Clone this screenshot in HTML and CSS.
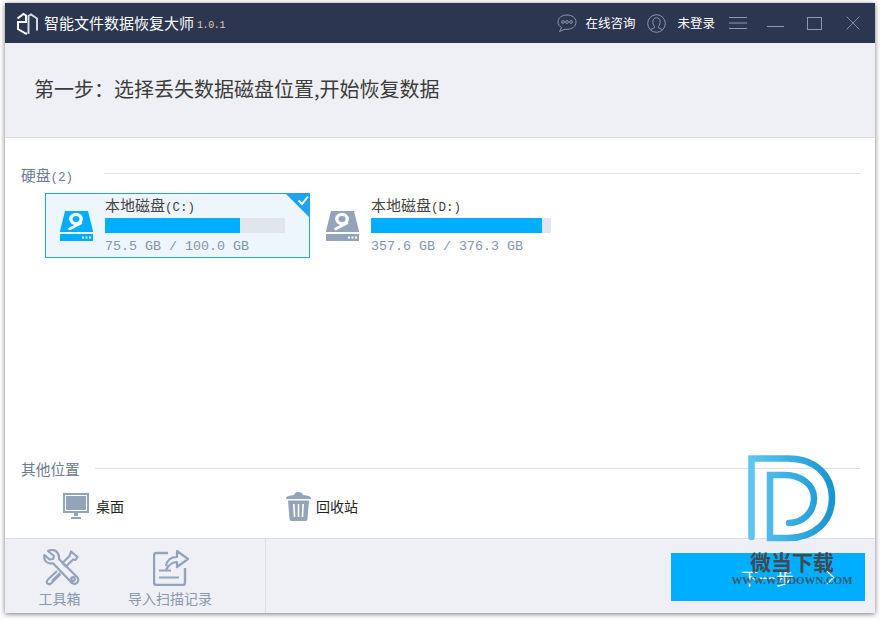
FILE: index.html
```html
<!DOCTYPE html>
<html lang="zh">
<head>
<meta charset="utf-8">
<title>智能文件数据恢复大师</title>
<link rel="stylesheet" href="styles.css">
</head>
<body>
<div class="window">
  <header class="titlebar">
    <svg class="logo" width="22" height="23" viewBox="0 0 22 23" fill="none" stroke="#fff" stroke-width="2">
      <path d="M1.500 6.500 L7.500 2 L10 3.500 V10 H2 V17 L9.500 21.500 H11"/>
      <path d="M12.500 22 V4 L15 2.500 L21 6.500 V18.500" stroke="#d5d9e2"/>
    </svg>
    <span class="app-name">智能文件数据恢复大师</span>
    <span class="version">1.0.1</span>
    <div class="title-actions">
      <svg class="icon-chat" width="20" height="19" viewBox="0 0 20 19" fill="none" stroke="#8a97ab" stroke-width="1">
        <path d="M10 1 C5 1 1 3.800 1 8 C1 10.500 2.600 12.400 4.600 13.600 L2.500 17.500 L8 15.200 C8.700 15.300 9.300 15.300 10 15.300 C15 15.300 19 12.300 19 8 C19 3.800 15 1 10 1 Z"/>
        <circle cx="6" cy="8" r="1.400"/><circle cx="10" cy="8" r="1.400"/><circle cx="14" cy="8" r="1.400"/>
      </svg>
      <span class="action-text chat-text">在线咨询</span>
      <svg class="icon-user" width="19" height="19" viewBox="0 0 19 19" fill="none" stroke="#8a97ab" stroke-width="1">
        <circle cx="9.500" cy="9.500" r="8.800"/>
        <path d="M7.600 12.600 C6.200 10.800 5.600 9 5.900 7 C6.200 5 7.600 3.800 9.500 3.800 C11.400 3.800 12.800 5 13.100 7 C13.400 9 12.800 10.800 11.400 12.600 V13.600 L15.500 15.600 M7.600 12.600 V13.600 L3.500 15.600"/>
      </svg>
      <span class="action-text user-text">未登录</span>
      <svg class="icon-menu" width="18" height="12" viewBox="0 0 18 12" stroke="#8a9bb5" stroke-width="1"><path d="M0 .5H18M0 6H18M0 11.500H18"/></svg>
      <svg class="icon-min" width="17" height="1" viewBox="0 0 17 1" stroke="#8a9bb5" stroke-width="1"><path d="M0 .5H17"/></svg>
      <svg class="icon-max" width="15" height="13" viewBox="0 0 15 13" fill="none" stroke="#8a9bb5" stroke-width="1"><rect x=".5" y=".5" width="14" height="12"/></svg>
      <svg class="icon-close" width="14" height="14" viewBox="0 0 14 14" stroke="#7f8ea6" stroke-width="1"><path d="M.5 .5L13.500 13.500M13.500 .5L.5 13.500"/></svg>
    </div>
  </header>

  <div class="step-header">
    <h1 class="step-title">第一步：选择丢失数据磁盘位置,开始恢复数据</h1>
  </div>

  <main class="content">
    <section class="disks">
      <div class="section-head head-disks">
        <span class="section-label">硬盘<span class="latin">(2)</span></span>
        <span class="section-line"></span>
      </div>
      <div class="disk-row">
        <div class="disk selected">
          <svg class="disk-icon" width="35" height="30" viewBox="0 0 35 30"><use href="#hdd"/></svg>
          <div class="disk-info">
            <div class="disk-name">本地磁盘<span class="latin">(C:)</span></div>
            <div class="bar"><div class="bar-fill" style="width:75%"></div></div>
            <div class="disk-size">75.5 GB / 100.0 GB</div>
          </div>
          <svg class="check" width="25" height="25" viewBox="0 0 25 25">
            <path d="M0 0H25V25Z" fill="#1ea3ee"/>
            <path d="M13.500 7.500 L17 11 L23 3.500" fill="none" stroke="#fff" stroke-width="2"/>
          </svg>
        </div>
        <div class="disk">
          <svg class="disk-icon" width="35" height="30" viewBox="0 0 35 30"><use href="#hdd"/></svg>
          <div class="disk-info">
            <div class="disk-name">本地磁盘<span class="latin">(D:)</span></div>
            <div class="bar"><div class="bar-fill" style="width:95%"></div></div>
            <div class="disk-size">357.6 GB / 376.3 GB</div>
          </div>
        </div>
      </div>
    </section>

    <section class="others">
      <div class="section-head">
        <span class="section-label">其他位置</span>
        <span class="section-line"></span>
      </div>
      <div class="place-row">
        <div class="place place-desktop">
          <svg width="26" height="27" viewBox="0 0 26 27" fill="#93a3ba">
            <path fill-rule="evenodd" d="M0 0H26V20H0Z M2 2V18H24V2Z"/>
            <path d="M3 3H23V17H3Z"/>
            <path d="M11 20H15V23H11Z M8 24H18V26H8Z"/>
          </svg>
          <span>桌面</span>
        </div>
        <div class="place place-trash">
          <svg width="25" height="29" viewBox="0 0 25 29" fill="#93a3ba">
            <path d="M0 6 C0 4.500 3 3.500 8 3 C8.500 1 10 0 12.500 0 C15 0 16.500 1 17 3 C22 3.500 25 4.500 25 6 V7 H0Z"/>
            <path fill-rule="evenodd" d="M2 8.500H23L21.500 27 C21.400 28.200 20.500 29 19.500 29 H5.500 C4.500 29 3.600 28.200 3.500 27Z M7 12 L7.800 25 H9.300 L8.700 12Z M11.700 12 V25 H13.300 V12Z M16.300 12 L15.700 25 H17.200 L18 12Z"/>
          </svg>
          <span>回收站</span>
        </div>
      </div>
    </section>
  </main>

  <footer class="footer">
    <div class="tools">
      <div class="tool tool-box">
        <svg width="37" height="37" viewBox="0 0 37 37" fill="none" stroke="#93a3ba" stroke-width="2.200" stroke-linejoin="round">
          <path d="M5 2 L11 7 L10 10 L6.500 10.500 L1.500 6 C0.500 10.500 2.500 14 7 14.500 L10 14.300 L27 32 C29 34.800 31 35.500 33 34.500 C35.500 33 35.800 30.500 34.500 28.500 L16 10 C16.500 5 13.500 .8 8.500 .8 Z"/>
          <circle cx="30" cy="30" r="1.800"/>
          <path d="M28 2.500 L34.500 8 L32.500 11 L30 10.500 L23 17.500 L19.500 14 L26.500 7 Z"/>
          <path d="M14 22 L5 30.500 C3.500 32 3.500 33.500 4.500 34.500 C5.500 35.500 7 35.500 8.500 34 L17.500 25 M9 32 L17 24"/>
        </svg>
        <span class="tool-label">工具箱</span>
      </div>
      <div class="tool tool-import">
        <svg width="36" height="37" viewBox="0 0 36 37" fill="none" stroke="#93a3ba" stroke-width="2.400" stroke-linejoin="round">
          <path d="M15 4 H3.500 C2 4 1 5 1 6.500 V33.500 C1 35 2 36 3.500 36 H29.500 C31 36 32 35 32 33.500 V19"/>
          <path d="M13 17 C14 11 18 8 24 8 V2 L35 10 L24 18 V13 C19 13 16 15 13 21" stroke-width="2.200"/>
          <path d="M6 21.500 H18 M6 28.500 H26" stroke-width="2"/>
        </svg>
        <span class="tool-label">导入扫描记录</span>
      </div>
    </div>
    <div class="footer-action">
      <button class="next" type="button"><span class="next-text">下一步</span><svg class="next-chevron" width="9" height="15" viewBox="0 0 9 15" fill="none" stroke="#fff" stroke-width="1.300"><path d="M1 1L7.500 7.500L1 14"/></svg></button>
    </div>
  </footer>

  <div class="watermark">
    <svg class="wm-logo" width="88" height="89" viewBox="0 0 88 89" fill="none" stroke-width="6.500" stroke-linecap="round">
      <defs>
        <linearGradient id="wmg" x1="0" y1="0" x2="1" y2="0">
          <stop offset="0" stop-color="#5cc6f0"/><stop offset="1" stop-color="#1895d2"/>
        </linearGradient>
      </defs>
      <path d="M3.500 82 V3.500 H40 C67 3.500 84 20 84 43 C84 67 66 83 40 83 H22 V20 H37 C52 20 66 29 66 43 C66 58 54 68 41 68" stroke="url(#wmg)"/>
    </svg>
    <div class="wm-name">微当下载</div>
    <div class="wm-url">WWW.WEIDOWN.COM</div>
  </div>
</div>

<svg class="defs" width="0" height="0">
  <defs>
    <symbol id="hdd" viewBox="0 0 35 30">
      <path fill="currentColor" d="M6 0H29L34 20V21H1V20Z"/>
      <ellipse cx="17" cy="8" rx="5.200" ry="4.600" fill="none" stroke="#fff" stroke-width="3.400"/>
      <path d="M22 12 L10.500 18" stroke="#fff" stroke-width="2.600" stroke-linecap="round"/>
      <path fill="currentColor" fill-rule="evenodd" d="M1 23H34V30H1Z M23 25.500V27.500H25V25.500Z M26.500 25.500V27.500H28.500V25.500Z M30 25.500V27.500H32V25.500Z"/>
    </symbol>
  </defs>
</svg>
</body>
</html>
```
FILE: styles.css
```css
* { box-sizing: border-box; }
html, body { margin: 0; padding: 0; }
body {
  width: 880px;
  height: 620px;
  padding: 3px 5px 7px;
  background: #fff;
  overflow: hidden;
  font-family: "Noto Sans CJK SC", "Liberation Sans", sans-serif;
}
.window {
  position: relative;
  width: 870px;
  height: 610px;
  display: flex;
  flex-direction: column;
  background: #fff;
  box-shadow: 0 1px 5px rgba(0, 0, 0, .55);
}
.defs { position: absolute; }

.titlebar {
  flex: 0 0 40px;
  display: flex;
  align-items: center;
  padding-left: 11px;
  background: #2c3650;
  color: #fff;
}
.logo { flex: none; }
.app-name { margin-left: 6px; font-size: 15px; line-height: 20px; }
.version {
  margin: 5px 0 0 3px;
  font: 10px "Liberation Mono", monospace;
  letter-spacing: -.4px;
  color: #e3c9a8;
}
.title-actions { margin-left: auto; display: flex; align-items: center; }
.icon-chat { margin-right: 8px; }
.action-text { font-size: 12.5px; line-height: 18px; white-space: nowrap; }
.chat-text { margin-right: 12px; }
.icon-user { margin-right: 11px; }
.user-text { margin-right: 14px; }
.icon-menu { margin-right: 20px; }
.icon-min { margin: 7px 23px 0 0; }
.icon-max { margin-right: 24px; }
.icon-close { margin-right: 15px; }

.step-header {
  flex: 0 0 95px;
  display: flex;
  align-items: center;
  padding: 0 0 3px 29px;
  background: #eff0f5;
  border-bottom: 1px solid #dcdde2;
}
.step-title { margin: 0; font-size: 20px; font-weight: 400; color: #3c3c3c; line-height: 28px; white-space: nowrap; }

.content { flex: 1; display: flex; flex-direction: column; justify-content: space-between; min-height: 0; }
.section-head { display: flex; align-items: flex-start; height: 20px; padding: 0 15px 0 16px; }
.head-disks { margin-top: 27px; }
.section-label { font-size: 14.700px; line-height: 20px; color: #6e7b90; white-space: nowrap; }
.section-line { flex: 1; height: 1px; margin: 8px 0 0 15px; background: #e0e0e0; }
.head-disks .section-line { margin-left: 31px; }
.latin { font: 12.500px "Liberation Mono", monospace; }

.disk-row { display: flex; gap: 1px; margin-top: 8px; padding-left: 40px; }
.disk {
  position: relative;
  flex: 0 0 265px;
  height: 65px;
  display: flex;
  padding: 0 0 0 15px;
  border: 1px solid transparent;
}
.disk.selected { background: #eef6fd; border-color: #1ea3ee; }
.disk-icon { margin: 17px 11px 0 -2px; flex: none; color: #93a3ba; }
.selected .disk-icon { color: #00aeff; }
.disk-info { display: flex; flex-direction: column; }
.disk-name { font-size: 15px; line-height: 22px; color: #444; white-space: nowrap; }
.bar { width: 180px; height: 15px; margin-top: 2px; background: #e1e5ee; }
.bar-fill { height: 100%; background: #00aeff; }
.disk-size { margin-top: 5px; font: 13.333px/17px "Liberation Mono", monospace; color: #8494aa; white-space: nowrap; }
.check { position: absolute; top: -1px; right: -1px; }

.others { padding-bottom: 17px; }
.others .section-line { margin: 9px 0 0 15px; }
.place-row { display: flex; margin-top: 12px; padding-left: 58px; }
.place { display: flex; align-items: center; gap: 7px; height: 30px; font-size: 14px; color: #222; white-space: nowrap; }
.place-desktop { width: 223px; }
.place-trash { gap: 5px; }

.footer {
  flex: 0 0 75px;
  display: flex;
  background: #eff0f5;
  border-top: 1px solid #dedfe4;
}
.tools { flex: 0 0 261px; display: flex; border-right: 1px solid #dedfe4; padding-left: 34px; }
.tool { display: flex; flex-direction: column; align-items: center; padding-top: 10px; }
.tool svg { flex: none; }
.tool-box { width: 41px; }
.tool-box svg { margin-left: 4px; }
.tool-import { width: 84px; margin-left: 48px; }
.tool-import svg { margin-left: 2px; }
.tool-label { margin-top: 1px; font-size: 14px; line-height: 22px; color: #8a98ac; white-space: nowrap; }
.footer-action { flex: 1; display: flex; justify-content: flex-end; padding: 14px 10px 0 0; }
.next {
  width: 194px;
  height: 48px;
  display: flex;
  align-items: center;
  padding: 0 0 0 70px;
  border: 0;
  background: #00aeff;
  color: #fff;
  font: 17.500px "Noto Sans CJK SC", sans-serif;
}
.next-text { width: 85px; text-align: left; }
.next-chevron { flex: none; }

.watermark {
  position: absolute;
  left: 732px;
  top: 452px;
  width: 110px;
  display: flex;
  flex-direction: column;
  align-items: center;
  pointer-events: none;
}
.wm-logo { flex: none; }
.wm-name { margin-top: 3px; font-size: 21px; line-height: 28px; font-weight: 700; color: #414a52; white-space: nowrap; }
.wm-url { margin-top: -2px; font: 700 10.900px/14px "Liberation Serif", serif; color: #3e4850; opacity: .8; white-space: nowrap; }
```
